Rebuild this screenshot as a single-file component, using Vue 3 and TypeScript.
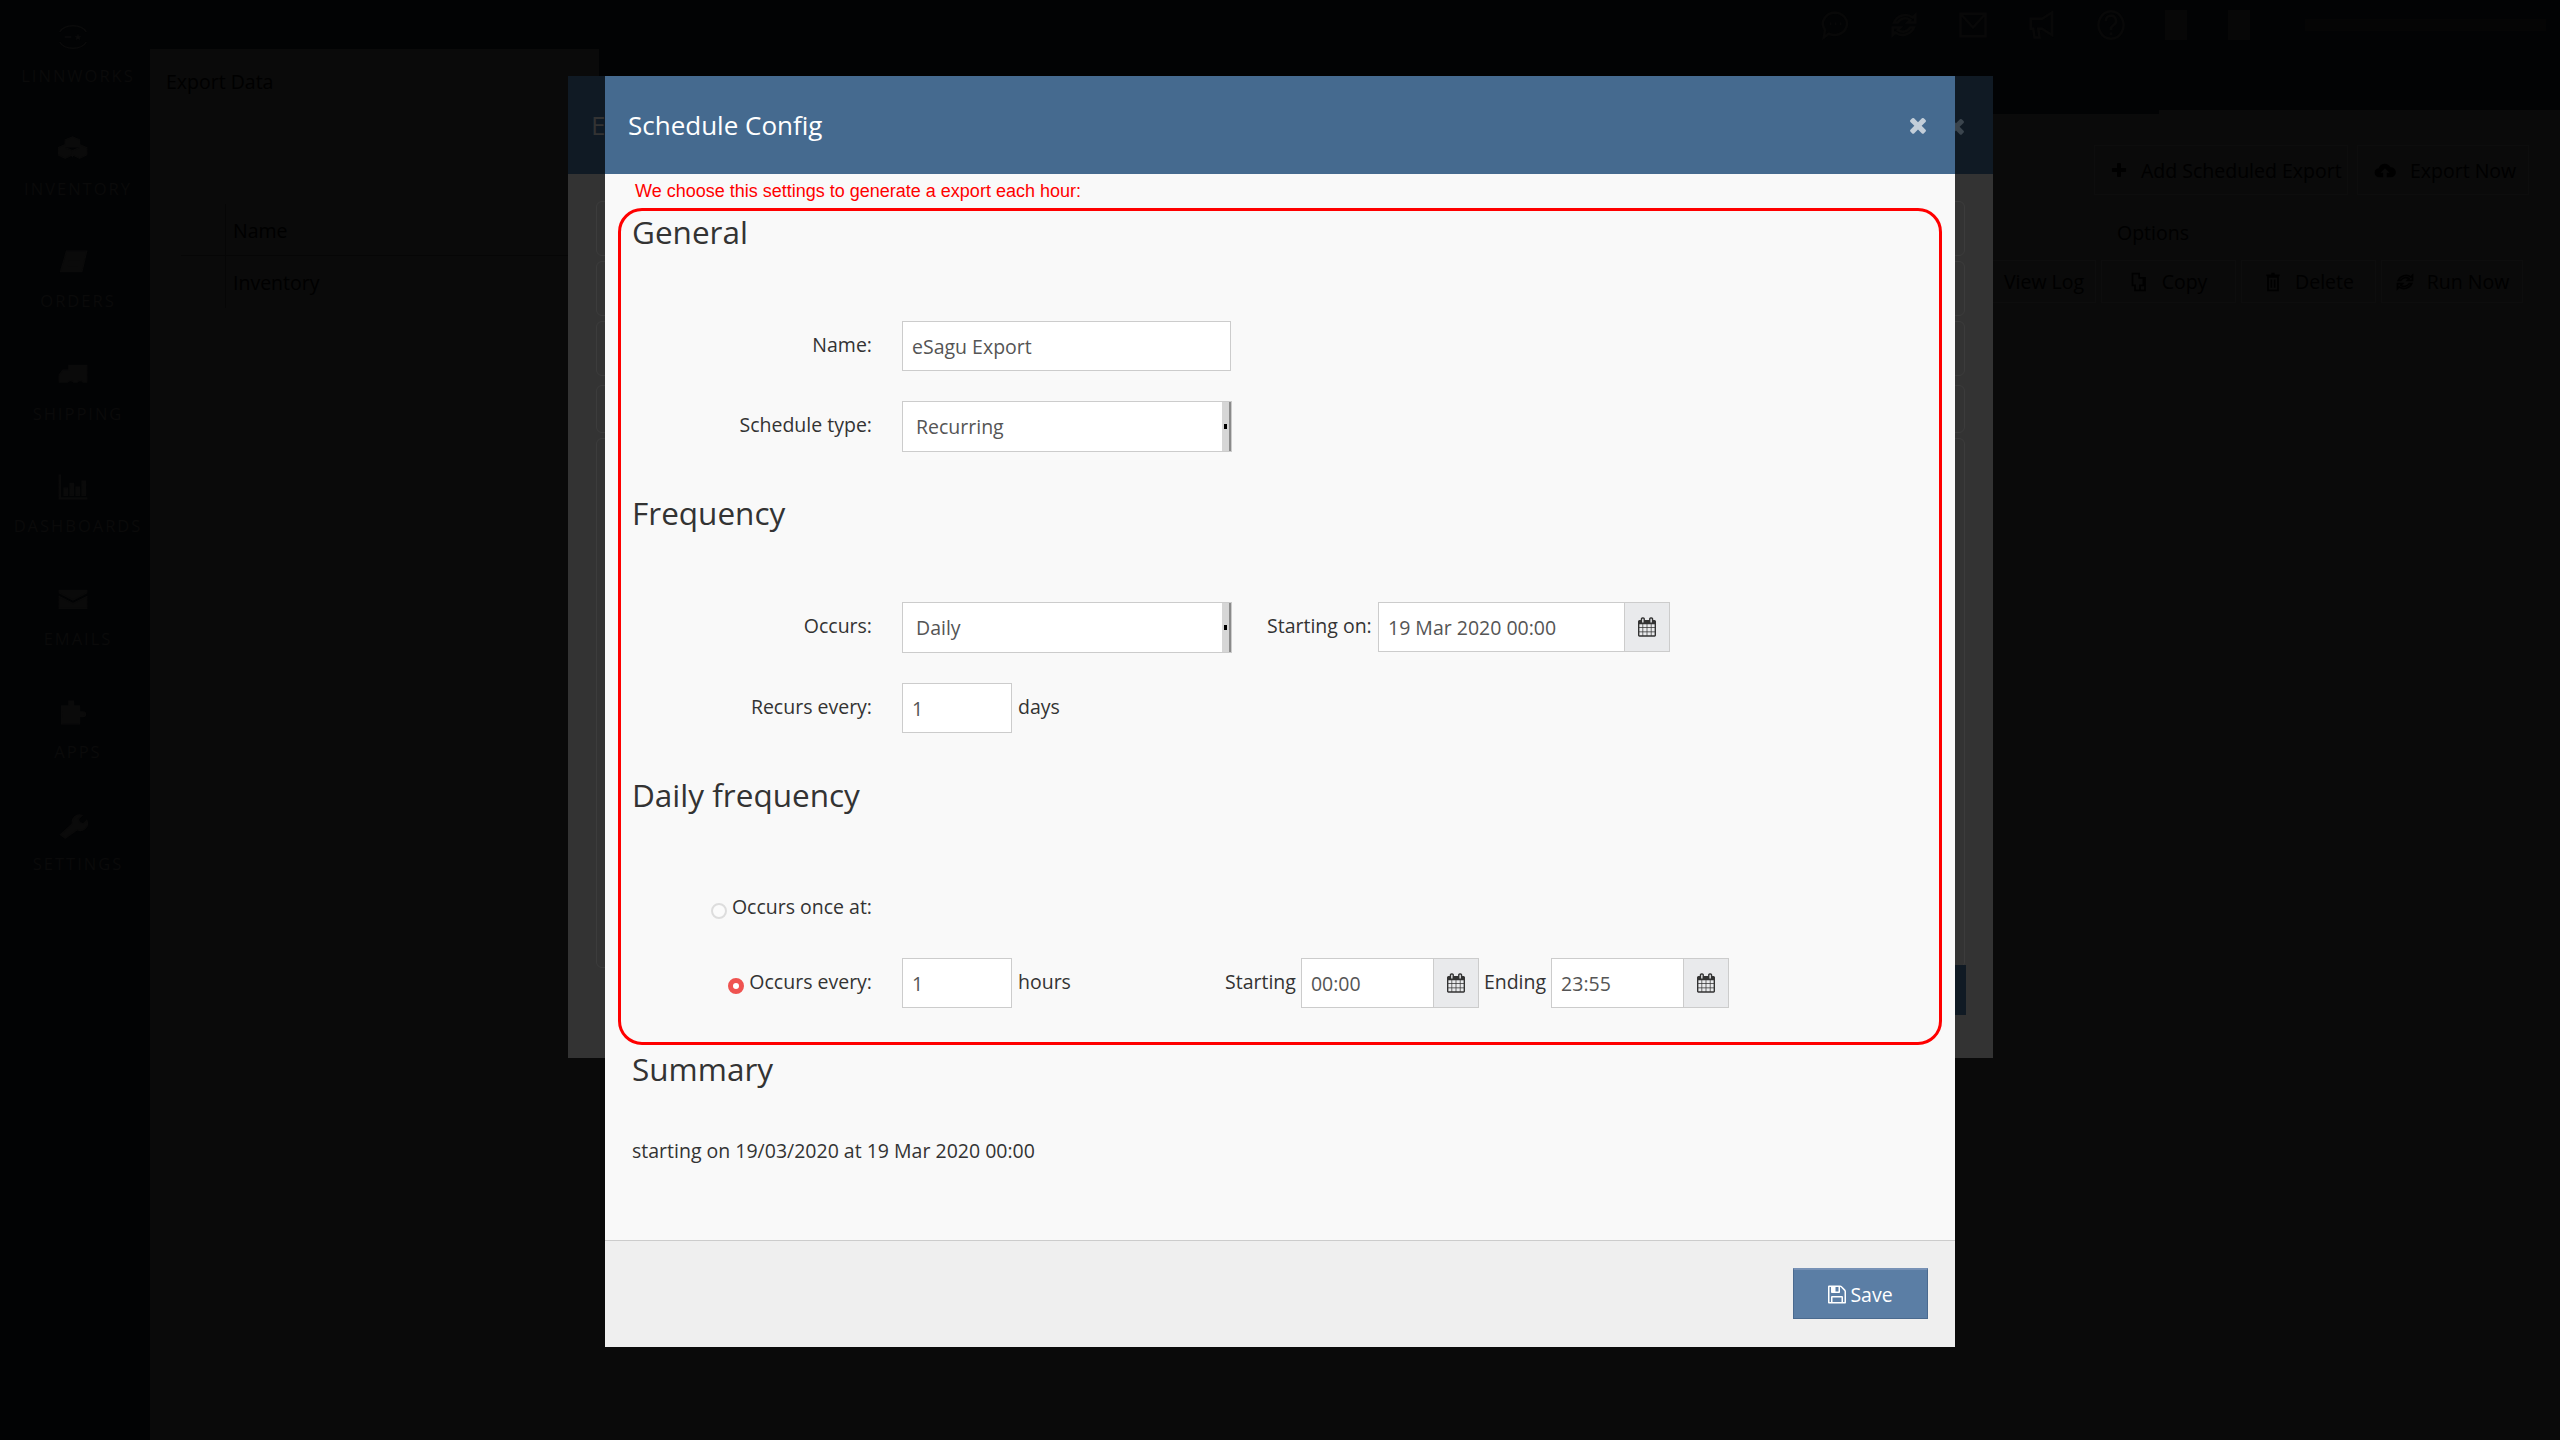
<script setup lang="ts">
const navItems: { label: string; icon: string }[] = [
  { label: 'INVENTORY', icon: 'M12 1l6 2.500v4l6 2.500v6l-6 3-6-3-6 3-6-3v-6l6-2.500v-4zM6 10l6 2.500 6-2.500M12 12.500V18' },
  { label: 'ORDERS', icon: 'M7 3h17l-4 17H2zM10 7h9M9 11h9M8 15h9' },
  { label: 'SHIPPING', icon: 'M9 4h15v14h-3a3 3 0 0 0-5 0h-3a3 3 0 0 0-5 0H1v-6l3-4h5z' },
  { label: 'DASHBOARDS', icon: 'M1 2v20h23v-1H2V2zM5 13h3v6H5zM10 9h3v10h-3zM15 12h3v7h-3zM20 7h3v12h-3z' },
  { label: 'EMAILS', icon: 'M1 4h23v2L12.500 12 1 6zM1 9l11.500 6L24 9v10H1z' },
  { label: 'APPS', icon: 'M9 2h4v4h5v5h3a2 2 0 0 1 0 4h-3v6H3V6h6z' },
  { label: 'SETTINGS', icon: 'M2 20l10-9a6 6 0 0 1 8-7l-3 3 1 3 3 1 3-3a6 6 0 0 1-8 8L6 23z' },
]
const CALENDAR = 'M128 1664h288v-288h-288v288zm352 0h320v-288h-320v288zm-352-352h288v-320h-288v320zm352 0h320v-320h-320v320zm-352-384h288v-288h-288v288zm736 736h320v-288h-320v288zm-384-736h320v-288h-320v288zm768 736h288v-288h-288v288zm-384-352h320v-320h-320v320zm-352-864v-288q0-13-9.500-22.500t-22.500-9.500h-64q-13 0-22.500 9.500t-9.500 22.500v288q0 13 9.500 22.500t22.500 9.500h64q13 0 22.500-9.500t9.500-22.500zm736 864h288v-320h-288v320zm-384-384h320v-288h-320v288zm384 0h288v-288h-288v288zm32-480v-288q0-13-9.500-22.500t-22.500-9.500h-64q-13 0-22.500 9.500t-9.500 22.500v288q0 13 9.500 22.500t22.500 9.500h64q13 0 22.500-9.500t9.500-22.500zm384-64v1280q0 52-38 90t-90 38h-1408q-52 0-90-38t-38-90v-1280q0-52 38-90t90-38h128v-96q0-66 47-113t113-47h64q66 0 113 47t47 113v96h384v-96q0-66 47-113t113-47h64q66 0 113 47t47 113v96h128q52 0 90 38t38 90z'
const FLOPPY = 'M384 1536h768v-384h-768v384zm896 0h128v-896q0-14-10-38.500t-20-34.500l-281-281q-10-10-34-20t-39-10v416q0 40-28 68t-68 28h-576q-40 0-68-28t-28-68v-416h-128v1280h128v-416q0-40 28-68t68-28h832q40 0 68 28t28 68v416zm-384-928v-320q0-13-9.500-22.500t-22.500-9.500h-192q-13 0-22.500 9.500t-9.500 22.500v320q0 13 9.500 22.500t22.500 9.500h192q13 0 22.500-9.500t9.500-22.500zm640 32v928q0 40-28 68t-68 28h-1344q-40 0-68-28t-28-68v-1344q0-40 28-68t68-28h928q40 0 88 20t76 48l280 280q28 28 48 76t20 88z'
const TIMES = 'M1298 1322q0 40-28 68l-136 136q-28 28-68 28t-68-28l-294-294-294 294q-28 28-68 28t-68-28l-136-136q-28-28-28-68t28-68l294-294-294-294q-28-28-28-68t28-68l136-136q28-28 68-28t68 28l294 294 294-294q28-28 68-28t68 28l136 136q28 28 28 68t-28 68l-294 294 294 294q28 28 28 68z'
const PLUS = 'M1408 800v192q0 40-28 68t-68 28h-416v416q0 40-28 68t-68 28h-192q-40 0-68-28t-28-68v-416h-416q-40 0-68-28t-28-68v-192q0-40 28-68t68-28h416v-416q0-40 28-68t68-28h192q40 0 68 28t28 68v416h416q40 0 68 28t28 68z'

const topIcons: string[] = [
  'M12 2a10 9 0 1 1-5 17l-4 3 1-6A10 9 0 0 1 12 2zM8 11h1M12 11h1M16 11h1',
  'M19 6a10 10 0 0 0-15 4h3a7 7 0 0 1 10-2l-2 2h6V4zM5 18a10 10 0 0 0 15-4h-3a7 7 0 0 1-10 2l2-2H3v6z',
  'M2 3h20v18H2zM2 3l10 11L22 3',
  'M20 2v18l-8-5H9l1 7H6l-1-7H3V7h9z',
  'M12 1a10 11 0 1 0 .01 0zM8 9a4 4 0 1 1 6 3l-2 2v2M12 18v2',
]
const toolbar = [
  { label: 'View Log', icon: '', cls: 'log' },
  { label: 'Copy', icon: 'M3 2h8v5h5v9h-4v6H6v-6H3zM12 7h6v15h-6', cls: 'copy' },
  { label: 'Delete', icon: 'M6 6h12v16H6zM4 4h16M10 2h4M10 9v10M14 9v10', cls: 'del' },
  { label: 'Run Now', icon: 'M19 6a10 10 0 0 0-15 4h3a7 7 0 0 1 10-2l-2 2h6V4zM5 18a10 10 0 0 0 15-4h-3a7 7 0 0 1-10 2l2-2H3v6z', cls: 'run' },
]
</script>

<template>
  <div class="page">
    <aside class="sidebar">
      <div class="nav-item">
        <svg class="nav-icon logo" viewBox="0 0 36 30" fill="none" stroke="#0b0b0b" stroke-width="1.600">
          <path d="M2 9C8 -1 28 -1 34 9M2 21c6 10 26 10 32 0M8 15h8" />
          <path d="M24 11l1.200 3h3l-2.400 2 1 3-2.800-2-2.800 2 1-3-2.400-2h3z" fill="#0b0b0b" stroke="none" />
        </svg>
        <span class="nav-label">LINNWORKS</span>
      </div>
      <div v-for="item in navItems" :key="item.label" class="nav-item">
        <svg class="nav-icon" viewBox="0 0 25 24"><path :d="item.icon" fill="#0a0a0a" stroke="#0a0a0a" /></svg>
        <span class="nav-label">{{ item.label }}</span>
      </div>
    </aside>

    <main class="main">
      <header class="topbar">
        <svg v-for="(d, i) in topIcons" :key="i" class="top-icon" viewBox="0 0 24 24" fill="none" stroke="#080808" stroke-width="2"><path :d="d" /></svg>
        <span class="top-block"></span>
        <span class="top-block"></span>
        <span class="top-strip"></span>
      </header>
      <div class="title-row">
        <div class="title-tab"><span>Export Data</span></div>
        <div class="title-edge"></div>
      </div>
      <section class="content">
        <div class="table">
          <div class="cell">Name</div>
          <div class="cell">Inventory</div>
        </div>
        <div class="actions">
          <div class="action-row">
            <span class="ghost add">
              <svg class="ghost-icon" viewBox="0 0 1408 1792"><path :d="PLUS" fill="#000" /></svg>Add Scheduled Export
            </span>
            <span class="ghost export">
              <svg class="ghost-icon cloud" viewBox="0 0 24 20"><path d="M6 18a5 5 0 0 1-1-10 7 7 0 0 1 13-1 5.500 5.500 0 0 1 1 11h-5v-5h3l-5-5-5 5h3v5z" fill="#000" /></svg>Export Now
            </span>
          </div>
          <div class="options">Options</div>
          <div class="tool-row">
            <span v-for="t in toolbar" :key="t.label" class="tool" :class="t.cls">
              <svg v-if="t.icon" class="tool-icon" viewBox="0 0 24 24" fill="none" stroke="#000" stroke-width="2"><path :d="t.icon" /></svg>{{ t.label }}
            </span>
          </div>
        </div>
      </section>
    </main>

    <div class="modal-back">
      <div class="back-head">
        <span class="back-title">E</span>
        <svg class="back-close" viewBox="0 0 1408 1792"><path :d="TIMES" fill="#3a444d" /></svg>
      </div>
      <div class="back-body">
        <div class="back-box"></div>
        <div class="back-box"></div>
        <div class="back-box"></div>
        <div class="back-box short"></div>
        <div class="back-box tall"></div>
        <div class="back-btn"></div>
      </div>
    </div>

    <div class="modal">
      <div class="modal-head">
        <span class="modal-title">Schedule Config</span>
        <svg class="close" viewBox="0 0 1408 1792"><path :d="TIMES" fill="#c3ced9" /></svg>
      </div>
      <div class="modal-body">
        <p class="note">We choose this settings to generate a export each hour:</p>
        <div class="highlight">
          <h3 class="heading">General</h3>
          <div class="row first">
            <label class="label">Name:</label>
            <div class="field wide name">eSagu Export</div>
          </div>
          <div class="row">
            <label class="label">Schedule type:</label>
            <div class="field select wide">Recurring<span class="spin"><i></i></span></div>
          </div>

          <h3 class="heading gap">Frequency</h3>
          <div class="row first">
            <label class="label">Occurs:</label>
            <div class="field select wide">Daily<span class="spin"><i></i></span></div>
            <label class="inline-label start-on">Starting on:</label>
            <div class="date on">
              <div class="field grow">19 Mar 2020 00:00</div>
              <span class="addon"><svg class="cal" viewBox="0 0 1664 1792"><path :d="CALENDAR" fill="#333" /></svg></span>
            </div>
          </div>
          <div class="row recurs">
            <label class="label">Recurs every:</label>
            <div class="field small">1</div>
            <span class="unit">days</span>
          </div>

          <h3 class="heading gap">Daily frequency</h3>
          <div class="row first once">
            <label class="label"><span class="radio"></span>Occurs once at:</label>
          </div>
          <div class="row">
            <label class="label"><span class="radio on"></span>Occurs every:</label>
            <div class="field small">1</div>
            <span class="unit hours">hours</span>
            <label class="inline-label">Starting</label>
            <div class="date time">
              <div class="field grow">00:00</div>
              <span class="addon"><svg class="cal" viewBox="0 0 1664 1792"><path :d="CALENDAR" fill="#333" /></svg></span>
            </div>
            <label class="inline-label ending">Ending</label>
            <div class="date time">
              <div class="field grow">23:55</div>
              <span class="addon"><svg class="cal" viewBox="0 0 1664 1792"><path :d="CALENDAR" fill="#333" /></svg></span>
            </div>
          </div>
        </div>
        <h3 class="heading summary">Summary</h3>
        <p class="summary-text">starting on 19/03/2020 at 19 Mar 2020 00:00</p>
      </div>
      <div class="modal-foot">
        <button class="save" type="button">
          <svg class="save-icon" viewBox="0 0 1536 1792"><path :d="FLOPPY" fill="#fff" /></svg>Save
        </button>
      </div>
    </div>
  </div>
</template>

<style>
html, body { margin: 0; background: #0a0a0a; }
</style>

<style scoped>
* { box-sizing: border-box; }
.page {
  position: relative;
  display: flex;
  width: 2560px;
  height: 1440px;
  overflow: hidden;
  background: #020304;
  font-family: "Open Sans", "Noto Sans", sans-serif;
  font-size: 19.500px;
  color: #333;
}

/* dimmed app behind the dialogs */
.sidebar { width: 150px; flex: none; display: flex; flex-direction: column; }
.nav-item { height: 112.600px; flex: none; display: flex; flex-direction: column; align-items: center; padding-top: 22px; }
.nav-icon { width: 30px; height: 30px; margin-right: 4px; }
.nav-label { margin-top: 13px; padding-left: 6px; height: 22px; line-height: 22px; font-size: 16.500px; letter-spacing: 2px; color: #0a0a0a; white-space: nowrap; }

.main { flex: 1; display: flex; flex-direction: column; min-width: 0; }
.topbar { height: 49px; flex: none; display: flex; align-items: center; padding-left: 1670px; }
.top-icon { width: 30px; height: 30px; margin-right: 39px; flex: none; }
.top-block { width: 22px; height: 30px; margin-right: 41px; background: #070707; flex: none; }
.top-strip { width: 241px; height: 12px; margin-left: 14px; flex: none; background: #050505; }
.title-row { height: 65px; flex: none; display: flex; justify-content: space-between; }
.title-tab { width: 449px; background: #0a0a0a; padding: 17px 0 0 16px; line-height: 32px; color: #000; }
.title-edge { width: 401px; height: 4px; margin-top: 61px; background: #0a0a0a; }
.content { flex: 1; background: #0a0a0a; display: flex; justify-content: space-between; color: #000; }
.table { margin: 90px 0 0 31px; width: 400px; height: 103px; }
.cell { height: 52px; line-height: 54px; padding-left: 52px; background: linear-gradient(#060606, #060606) 44px 0 / 1px 100% no-repeat; }
.cell:first-child { border-bottom: 1px solid #060606; }
.actions { width: 570px; display: flex; flex-direction: column; align-items: flex-end; padding: 31px 31px 0 0; }
.action-row { display: flex; gap: 9px; }
.ghost { display: flex; align-items: center; height: 50px; border: 1px solid #0d0d0d; white-space: nowrap; }
.add { width: 254px; padding-left: 16px; }
.export { width: 172px; padding-left: 16px; }
.ghost-icon { width: 16px; height: 18px; margin-right: 14px; }
.cloud { width: 22px; }
.options { align-self: flex-start; margin: 21px 0 0 127px; height: 34px; line-height: 34px; }
.tool-row { display: flex; gap: 5px; margin: 10px 6px 0 0; }
.tool { display: flex; align-items: center; justify-content: center; height: 43px; border: 1px solid #0d0d0d; white-space: nowrap; }
.log { width: 104px; }
.copy, .del { width: 135px; }
.run { width: 142px; }
.tool-icon { width: 20px; height: 22px; margin-right: 12px; }

.modal-back { position: absolute; left: 568px; top: 76px; width: 1425px; height: 982px; background: #333; overflow: hidden; }
.back-head { height: 98px; background: #101a24; position: relative; }
.back-title { position: absolute; left: 23px; top: 32px; font-size: 26px; line-height: 34px; color: #333; }
.back-close { position: absolute; left: 1378px; top: 38px; width: 20px; height: 24px; }
.back-body { display: flex; flex-direction: column; padding: 27px 28px 0; gap: 5px; }
.back-box { height: 55px; border: 1px solid #3c3c3c; border-radius: 6px; }
.back-box.short { height: 48px; margin-top: 4px; }
.back-box.tall { height: 530px; }
.back-btn { position: absolute; right: 27px; top: 889px; width: 100px; height: 50px; background: #101a24; }

/* front dialog */
.modal { position: absolute; left: 605px; top: 76px; width: 1350px; height: 1271px; display: flex; flex-direction: column; background: #f9f9f9; }
.modal-head { height: 98px; flex: none; background: #456a8f; display: flex; align-items: center; justify-content: space-between; padding: 0 27px 0 23px; }
.modal-title { font-size: 26px; color: #fff; line-height: 34px; }
.close { width: 20px; height: 24px; }
.modal-body { flex: 1; }
.note { margin: 0; height: 34px; line-height: 34px; padding-left: 30px; font-family: "Liberation Sans", Arial, sans-serif; font-size: 18px; color: #f00; }
.highlight { height: 837px; margin: 0 13px; padding: 0 0 0 11px; border: 3px solid #f00; border-radius: 24px; }
.heading { margin: 0; height: 42px; line-height: 42px; font-size: 31.500px; font-weight: 400; color: #333; }
.heading.gap { margin-top: 41px; }
.row { display: flex; align-items: center; height: 50px; margin-top: 30px; }
.row.first { margin-top: 68px; }
.row.recurs { margin-top: 31px; }
.row.once { height: 44px; }
.row.once .label { padding-bottom: 0; }
.label { width: 240px; flex: none; margin-right: 30px; text-align: right; padding-bottom: 4px; white-space: nowrap; }
.radio { display: inline-block; width: 16px; height: 16px; margin-right: 5px; border: 2px solid #ddd; border-radius: 50%; background: #fbfbfb; vertical-align: -5px; }
.radio.on { border: 5px solid #ef5350; background: #fff; }
.field { position: relative; height: 50px; padding: 2px 0 0 9px; background: #fff; border: 1.500px solid #ccc; color: #555; white-space: nowrap; line-height: 46px; }
.wide { width: 330px; }
.wide.name { width: 329px; }
.select { height: 51px; padding-left: 13px; }
.small { width: 110px; }
.grow { flex: 1; min-width: 0; }
.spin { position: absolute; right: 0; top: 0; bottom: 0; width: 9px; background: #d6d6d6; border-right: 2px solid #8a8a8a; display: flex; align-items: center; justify-content: center; }
.spin i { display: block; width: 3px; height: 5px; background: #000; }
.unit { margin-left: 6px; padding-bottom: 4px; }
.hours { width: 207px; flex: none; }
.inline-label { padding-bottom: 4px; white-space: nowrap; }
.start-on { margin-left: 35px; width: 106px; flex: none; }
.ending { margin-left: 5px; }
.date { display: flex; height: 50px; margin-left: 5px; }
.date.on { width: 292px; }
.date.time { width: 178px; }
.addon { width: 45px; flex: none; display: flex; align-items: center; justify-content: center; background: #e9eaec; border: 1.500px solid #ccc; border-left: 0; }
.cal { width: 18px; height: 20px; }
.summary { margin: 3px 0 0 27px; }
.summary-text { margin: 47px 0 0 27px; height: 28px; line-height: 28px; }
.modal-foot { height: 107px; flex: none; background: #efefef; border-top: 1.500px solid #ccc; display: flex; align-items: flex-start; justify-content: flex-end; padding: 27px 27px 0 0; }
.save { width: 135px; height: 51px; display: flex; align-items: center; justify-content: center; background: #5b7ea5; border: 1px solid #4a6a8f; border-top: 2px solid #7892b6; color: #fff; font: inherit; padding: 0; }
.save-icon { width: 18px; height: 21px; margin-right: 4px; }
</style>
